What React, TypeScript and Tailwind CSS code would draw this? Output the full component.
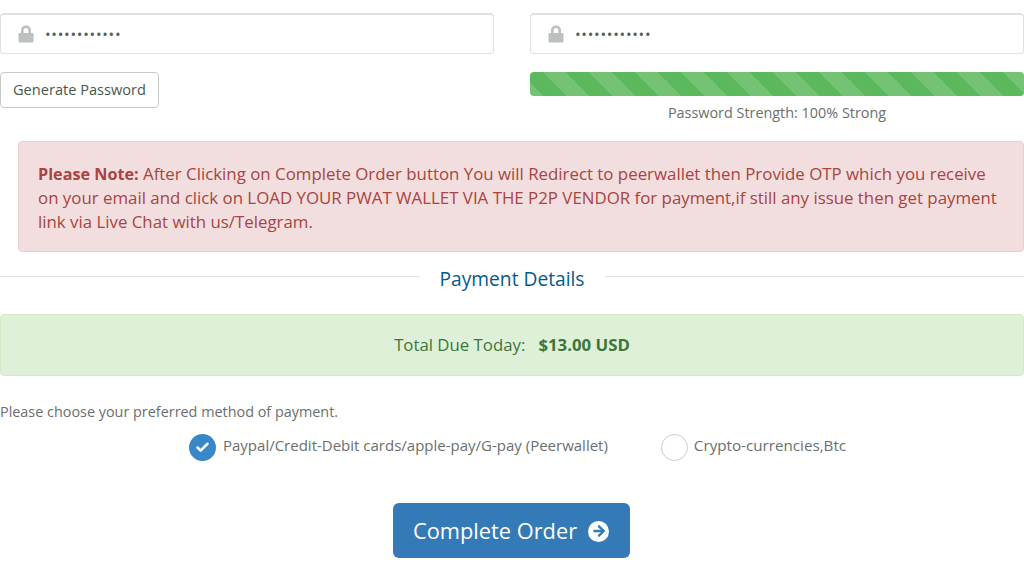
import { ArrowRight, Check } from 'lucide-react'

function LockIcon() {
  return (
    <svg width="16" height="18" viewBox="0 0 16 18" className="shrink-0 text-[#bcc0c1]" fill="currentColor">
      <path d="M8 0.5C5 0.5 3 2.7 3 5.5V8H1.6C.9 8 .5 8.5.5 9.2v7c0 .7.4 1.3 1.1 1.3h12.8c.7 0 1.1-.6 1.1-1.3v-7c0-.7-.4-1.2-1.1-1.2H13V5.5C13 2.7 11 .5 8 .5zM5.6 8V5.6C5.6 4 6.5 3 8 3s2.4 1 2.4 2.6V8z" />
    </svg>
  )
}

function PasswordField() {
  return (
    <div className="flex h-[41px] items-center rounded-[4px] border border-[#dfe1e1] border-t-2 bg-white pl-[17px]">
      <LockIcon />
      <span className="ml-[11px] text-[15px] leading-none tracking-[0.72px] text-[#4f6553]">••••••••••••</span>
    </div>
  )
}

export default function App() {
  return (
    <div className="h-[580px] w-[1024px] overflow-hidden bg-white pt-[13px] font-['Open_Sans',sans-serif] text-[14.4px] text-[#6a6f6d]">
      <div className="grid grid-cols-[494px_494px] gap-x-[36px]">
        <div>
          <PasswordField />
          <button className="mt-[18px] h-[36px] w-[159px] rounded-[4px] border border-[#c6cbcb] bg-white pb-[1px] text-[14.6px] text-[#46594c]">
            Generate Password
          </button>
        </div>
        <div>
          <PasswordField />
          <div className="mt-[18px] h-[24px] rounded-[4px] bg-[#5cb85c] bg-[linear-gradient(45deg,rgba(255,255,255,.15)_25%,transparent_25%,transparent_50%,rgba(255,255,255,.15)_50%,rgba(255,255,255,.15)_75%,transparent_75%,transparent)] bg-[length:46px_46px] bg-[position:13px_0]" />
          <p className="mt-[7px] text-center leading-[20px]">Password Strength: 100% Strong</p>
        </div>
      </div>

      <div className="mt-[18px] ml-[18px] h-[111px] rounded-[4px] border border-[#ebccd1] bg-[#f2dede] px-[19px] pt-[20px] text-[16.85px] leading-[24px] text-[#a94442]">
        <strong className="text-[16.2px] font-bold">Please Note:</strong> After Clicking on Complete Order button You will Redirect to peerwallet then Provide OTP which you receive on your email and click on LOAD YOUR PWAT WALLET VIA THE P2P VENDOR for payment,if still any issue then get payment link via Live Chat with us/Telegram.
      </div>

      <div className="mt-[12px] flex h-[30px] items-center gap-[20px]">
        <div className="mt-[-6px] h-px flex-1 bg-[#dfe1e1]" />
        <h2 className="text-[19.2px] leading-[30px] text-[#045a8d]">Payment Details</h2>
        <div className="mt-[-6px] h-px flex-1 bg-[#dfe1e1]" />
      </div>

      <div className="mt-[20px] flex h-[62px] items-center justify-center rounded-[4px] border border-[#d6e9c6] bg-[#dff0d8] text-[16.8px] text-[#3c763d]">
        Total Due Today:
        <strong className="ml-[13px] font-bold">$13.00 USD</strong>
      </div>

      <p className="mt-[26px] leading-[20px]">Please choose your preferred method of payment.</p>

      <div className="mt-[11px] flex h-[28px] items-center pl-[189px] text-[15px]">
        <span className="flex size-[27px] items-center justify-center rounded-full bg-[#3a87c8] text-white">
          <Check size={15} strokeWidth={4} />
        </span>
        <span className="mb-[4px] ml-[7px]">Paypal/Credit-Debit cards/apple-pay/G-pay (Peerwallet)</span>
        <span className="ml-[53px] size-[27px] rounded-full border border-[#c9cccc] bg-white" />
        <span className="mb-[4px] ml-[6px] text-[15.2px]">Crypto-currencies,Btc</span>
      </div>

      <div className="mt-[42px] flex justify-center pr-[2px]">
        <button className="flex h-[55px] w-[237px] items-center justify-center gap-[11px] rounded-[6px] bg-[#337ab7] pt-[1px] text-[21.8px] text-white">
          Complete Order
          <span className="flex size-[21px] items-center justify-center rounded-full bg-white text-[#337ab7]">
            <ArrowRight size={16} strokeWidth={3.5} />
          </span>
        </button>
      </div>
    </div>
  )
}
